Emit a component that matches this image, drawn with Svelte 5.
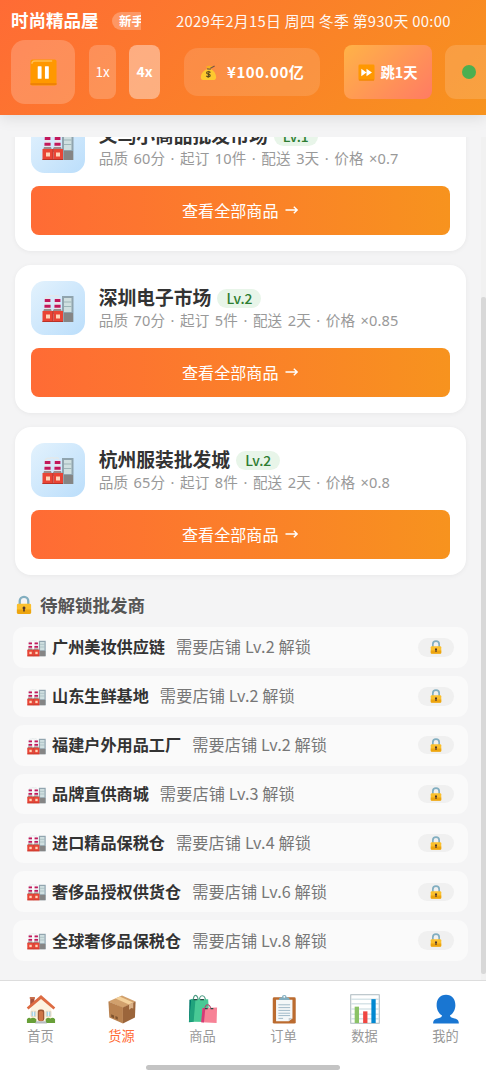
<script lang="ts">
  let currentTab = 'source';
  let speed = 4;
  let paused = false;

  const suppliers = [
    { name: '义乌小商品批发市场', level: 1, quality: 60, minOrder: 10, days: 3, price: '0.7' },
    { name: '深圳电子市场', level: 2, quality: 70, minOrder: 5, days: 2, price: '0.85' },
    { name: '杭州服装批发城', level: 2, quality: 65, minOrder: 8, days: 2, price: '0.8' }
  ];

  const lockedSuppliers = [
    { name: '广州美妆供应链', level: 2 },
    { name: '山东生鲜基地', level: 2 },
    { name: '福建户外用品工厂', level: 2 },
    { name: '品牌直供商城', level: 3 },
    { name: '进口精品保税仓', level: 4 },
    { name: '奢侈品授权供货仓', level: 6 },
    { name: '全球奢侈品保税仓', level: 8 }
  ];

  const tabs = [
    { id: 'home', label: '首页' },
    { id: 'source', label: '货源' },
    { id: 'goods', label: '商品' },
    { id: 'orders', label: '订单' },
    { id: 'data', label: '数据' },
    { id: 'mine', label: '我的' }
  ];
</script>

{#snippet factory()}
  <svg class="factory" viewBox="0 0 32 28">
    <path d="M3 4q1-3.500 5-2.500 2-2 4 0 3-1.500 5 .5" fill="none" stroke="#e3e8ea" stroke-width="1.5" />
    <path d="M3.2 3h4.6l.6 13H2.6zM13.2 3h4.6l.6 13h-5.8z" fill="#e8e4ea" />
    <path d="M2.8 4h5.600v3H2.700zM2.500 9.700h6.100v3H2.400zM12.800 4h5.600v3h-5.700zM12.500 9.700h6.100v3h-6.200z" fill="#c2185b" />
    <rect x="20" y="1" width="11.5" height="26" fill="#90a4ae" />
    <rect x="22" y="3" width="7.5" height="14" fill="#cfdfe0" />
    <path d="M22 7h7.5M22 11.5h7.5" stroke="#9db5b8" stroke-width="1" />
    <rect x="22" y="18" width="9" height="9" fill="#858585" />
    <path d="M1 17l1-3h7l1 3 2-3h7l1 3v2H1z" fill="#9b8c8c" />
    <path d="M.5 16H11v11H.5zM11.5 16H21v11h-9.5z" fill="#e94435" />
    <path d="M11 16v11M.5 26.5H21" stroke="#b93228" />
    <rect x="4" y="19.5" width="4" height="4" fill="#ffd4b8" />
    <rect x="14" y="19.5" width="4" height="4" fill="#ffd4b8" />
  </svg>
{/snippet}

{#snippet lock()}
  <svg class="lock" viewBox="0 0 18 22">
    <path d="M4.2 11V6.6a4.8 4.8 0 0 1 9.6 0V11" fill="none" stroke="#82aec0" stroke-width="2.6" />
    <rect x="1" y="9.5" width="16" height="11.5" rx="1.6" fill="#fbc02d" />
    <path d="M1 16h16v3.4q0 1.6-1.6 1.6H2.6q-1.6 0-1.6-1.6z" fill="#e59600" opacity=".65" />
    <path d="M9 12.6a1.7 1.7 0 0 1 .9 3.1v2.6H8.1v-2.6a1.7 1.7 0 0 1 .9-3.1z" fill="#4e342e" />
  </svg>
{/snippet}

<div class="app">
  <header>
    <div class="title-row">
      <span class="shop-name">时尚精品屋</span>
      <span class="tag-clip"><span class="tag">新手</span></span>
      <span class="date">2029年2月15日 周四 冬季 第930天 00:00</span>
    </div>
    <div class="controls">
      <button class="pause" on:click={() => (paused = !paused)} aria-label="暂停">
        <svg viewBox="0 0 28 28">
          <rect x=".5" y=".5" width="27" height="27" rx="2" fill="#ff9800" />
          <path d="M2 5q0-3 3-3h18" fill="none" stroke="#ffbd52" stroke-width="1.5" />
          <path d="M.5 26h27" stroke="#ef8205" stroke-width="2" />
          <rect x="8" y="7.5" width="4" height="13" rx=".6" fill="#fff" />
          <rect x="15.5" y="7.5" width="4" height="13" rx=".6" fill="#fff" />
        </svg>
      </button>
      <button class="speed one" class:active={speed === 1} on:click={() => (speed = 1)}>1x</button>
      <button class="speed four" class:active={speed === 4} on:click={() => (speed = 4)}>4x</button>
      <div class="money">
        <svg viewBox="0 0 18 18">
          <path d="M8.2 5C3 7 .8 11 .9 14.2c.1 2 1.4 2.8 3.4 2.8h9.2c2.4 0 3.5-1 3.5-3C17 10.5 14.5 6.5 11 5z" fill="#fdc92f" />
          <path d="M8 5.2L6.5 2.3q2 .6 3-.8 1.5 1.5 4.5.3L11.2 5.2z" fill="#f9b31c" />
          <path d="M7.5 5.2l4 .3M11 4.5l4.5-2.5" stroke="#795548" stroke-width="1.2" />
          <path d="M11.3 8.7q-4.3-1.2-4.3.7c0 1.7 4 1 3.8 2.9-.2 1.5-2.6 1.5-4.3.5M9.7 7.2l-1.3 7.5" fill="none" stroke="#5d4a1c" stroke-width="1.2" />
        </svg>
        <span>¥100.00亿</span>
      </div>
      <button class="skip">
        <svg viewBox="0 0 18 18">
          <rect x=".5" y=".5" width="17" height="17" rx="1.5" fill="#ff9800" />
          <path d="M1 17h16" stroke="#ed8208" />
          <path d="M3.500 5l5.500 4-5.500 4zM9 5l5.800 4L9 13z" fill="#fff" />
        </svg>
        <span>跳1天</span>
      </button>
      <div class="status"><i></i></div>
    </div>
  </header>

  <main>
    <div class="content">
      {#each suppliers as s}
        <div class="card">
          <div class="card-head">
            <div class="card-icon">{@render factory()}</div>
            <div class="card-info">
              <div class="card-title">
                <span class="name">{s.name}</span>
                <span class="level">Lv.{s.level}</span>
              </div>
              <div class="desc">品质 {s.quality}分 · 起订 {s.minOrder}件 · 配送 {s.days}天 · 价格 ×{s.price}</div>
            </div>
          </div>
          <button class="view-all">
            <span>查看全部商品</span>
            <svg viewBox="0 0 14 12"><path d="M.5 6h12M8.8 2.8L12.2 6 8.8 9.2" /></svg>
          </button>
        </div>
      {/each}

      <h2>{@render lock()}<span>待解锁批发商</span></h2>

      <div class="locked-list">
        {#each lockedSuppliers as s}
          <div class="locked">
            {@render factory()}
            <span class="locked-name">{s.name}</span>
            <span class="need">需要店铺 Lv.{s.level} 解锁</span>
            <span class="pill">{@render lock()}</span>
          </div>
        {/each}
      </div>
    </div>
    <div class="scrollbar"><div class="thumb"></div></div>
  </main>

  <nav>
    <div class="tabs">
      {#each tabs as tab}
        <button class="tab" class:selected={currentTab === tab.id} on:click={() => (currentTab = tab.id)}>
          <svg viewBox="0 0 32 32">
            {#if tab.id === 'home'}
              <path d="M4.5 4H9v9H4.5z" fill="#a8513b" />
              <path d="M4 3.2h5.5v2H4z" fill="#c9714f" />
              <path d="M5 14L16 4.5 27 14v15H5z" fill="#fdf3e0" />
              <path d="M16 1L.8 14.5l1.8 2L16 5.2l13.4 11.3 1.8-2z" fill="#dd6b42" />
              <rect x="12.5" y="16.5" width="7" height="12.5" rx="2.5" fill="#9c5635" />
              <rect x="13.8" y="18" width="4.4" height="11" rx="1.8" fill="#ce7547" />
              <path d="M5.5 18.5h5V24h-5zM21.5 18.5h5V24h-5z" fill="#a8d4e8" stroke="#e6d5be" />
              <path d="M8 18.5V24M24 18.5V24" stroke="#fff" stroke-width=".8" />
              <path d="M1 27q2-2.500 4-1 3-1.500 6 1v4H1zM21 27q2-2.500 5-1 3-1.500 5 1v4H21z" fill="#689f38" />
              <path d="M11 29h10l1.5 2.5h-13z" fill="#b7bcc0" />
            {:else if tab.id === 'source'}
              <path d="M1.5 8L16 1.5 30.5 8 17 15z" fill="#d1a06c" />
              <path d="M1.5 8L17 14.5v17L2.5 25z" fill="#b98250" />
              <path d="M30.5 8L17 14.5v17L29.8 25z" fill="#9b653b" />
              <path d="M9 4.7l4.5-2.1L28 9l-4.500 2.300z" fill="#f4d19b" />
              <path d="M23.5 11.3L28 9v6.5l-2-.7-2.5 2z" fill="#d9b188" />
              <path d="M4.5 21.5l3 1.3v3l-3-1.3zM9 23.5l2.5 1v3L9 26.5z" fill="#7f542f" />
            {:else if tab.id === 'goods'}
              <path d="M5.5 8c0-9 5-8.5 5.5 0M12 8c0-8 6-8.5 7 0" fill="none" stroke="#4d9b83" stroke-width="1.2" />
              <path d="M1.5 6L4 5.5 6 29.5l-5 .5z" fill="#00796b" />
              <path d="M3.5 5.5h18l1.5 24.3-18.5-.3z" fill="#49c995" />
              <path d="M3.5 5.5H8L6 29.5H1z" fill="#21a37c" />
              <path d="M18 16c.5-6 5-6 6.5 0" fill="none" stroke="#ad496f" stroke-width="1.2" />
              <path d="M15.5 15L31 14.5 30.5 31l-16-.8z" fill="#f78296" />
              <path d="M15.5 15h3L17 30.5l-3-.5z" fill="#d63b77" />
              <path d="M6 6h4M13 6h4M18 15.5h3M24 15.5h3" stroke="#284b46" stroke-width="1.3" />
            {:else if tab.id === 'orders'}
              <rect x="4" y="3.5" width="24.5" height="28" rx="1.5" fill="#bb6b2f" />
              <path d="M7.5 6H25v20l-4 3H7.5z" fill="#f4f7f8" />
              <path d="M25 25.5L21 29v-3.5z" fill="#c4cdd1" />
              <path d="M10 11.5h12.500M10 14.500h12.500M10 17.500h12.500M10 20.500h12.500M10 23h12.500M10 26h5" stroke="#9db6c5" />
              <path d="M10.500 6.500q0-3 3-3h.3a2.500 2.500 0 0 1 5 0h.3q3 0 3 3z" fill="#82aec0" />
              <circle cx="16.3" cy="3" r="1" fill="#fff" />
            {:else if tab.id === 'data'}
              <rect x=".8" y=".8" width="30.4" height="30.4" fill="#fff" stroke="#a7b5bb" />
              <path d="M1.5 5.5h29M1.500 10.500h29M1.500 16h29M1.500 21.500h29M1.500 26.500h29" stroke="#b9cfd7" stroke-width=".9" />
              <rect x="5" y="13.5" width="4.6" height="17.5" fill="#8bc367" />
              <rect x="14" y="18.5" width="4.6" height="12.5" fill="#ef4641" />
              <rect x="22.8" y="5.5" width="4.6" height="25.5" fill="#0288d1" />
            {:else}
              <path d="M16 .8c6.500 0 10 4.700 10 11.200 0 5-2.700 9.300-5.800 11 .4 2 2 2.200 5 3 3.500.8 4.500 2.300 4.500 5.500H2.300c0-3.200 1-4.700 4.500-5.500 3-.8 4.600-1 5-3C8.700 21.300 6 17 6 12 6 5.500 9.500.8 16 .8z" fill="#1976d2" />
            {/if}
          </svg>
          <span>{tab.label}</span>
        </button>
      {/each}
    </div>
    <div class="home-bar"></div>
  </nav>
</div>

<style>
  :global(body) {
    margin: 0;
    background: #f4f4f4;
  }

  .app {
    width: 486px;
    height: 1080px;
    display: flex;
    flex-direction: column;
    overflow: hidden;
    background: #f4f4f5;
    font-family: 'Noto Sans CJK SC', 'Noto Sans', sans-serif;
    color: #333;
  }

  button {
    font-family: inherit;
    border: none;
    margin: 0;
    padding: 0;
    cursor: pointer;
  }

  svg {
    display: block;
    flex: none;
  }

  header {
    position: relative;
    z-index: 1;
    flex: none;
    height: 115px;
    box-sizing: border-box;
    padding: 9px 0 0 11px;
    background: linear-gradient(135deg, #ff6b35, #f7931e);
    box-shadow: 0 3px 14px rgba(0, 0, 0, 0.1);
    color: #fff;
  }

  .title-row {
    display: flex;
    align-items: center;
    height: 22px;
    white-space: nowrap;
  }

  .shop-name {
    width: 101px;
    font-size: 17.5px;
    font-weight: 700;
    line-height: 22px;
  }

  .tag-clip {
    width: 29px;
    margin-top: 2px;
    overflow: hidden;
  }

  .tag {
    display: block;
    width: 42px;
    height: 18px;
    box-sizing: border-box;
    padding-left: 7px;
    border-radius: 9px;
    background: rgba(255, 255, 255, 0.25);
    font-size: 12.5px;
    font-weight: 700;
    line-height: 17px;
  }

  .date {
    margin-left: 35px;
    font-size: 14.85px;
    letter-spacing: 0.3px;
    opacity: 0.95;
  }

  .controls {
    display: flex;
    align-items: center;
    width: 475px;
    height: 64px;
    margin-top: 9px;
    overflow: hidden;
  }

  .controls > * {
    flex: none;
    color: #fff;
  }

  .pause {
    display: flex;
    align-items: center;
    justify-content: center;
    width: 64px;
    height: 64px;
    border-radius: 14px;
    background: rgba(255, 255, 255, 0.2);
  }

  .pause svg {
    width: 27px;
    height: 27px;
  }

  .speed {
    height: 54px;
    padding-bottom: 2px;
    border-radius: 8px;
    background: rgba(255, 255, 255, 0.2);
    font-size: 14px;
  }

  .one {
    width: 27px;
    margin-left: 14px;
    font-size: 13.5px;
  }

  .four {
    width: 31px;
    margin-left: 13px;
  }

  .speed.active {
    background: rgba(255, 255, 255, 0.4);
    font-weight: 700;
  }

  .money {
    display: flex;
    align-items: center;
    width: 136px;
    height: 48px;
    box-sizing: border-box;
    margin-left: 24px;
    padding-left: 16px;
    gap: 10px;
    border-radius: 14px;
    background: rgba(255, 255, 255, 0.13);
    font-size: 15px;
    font-weight: 700;
    letter-spacing: 0.55px;
    white-space: nowrap;
  }

  .money span,
  .skip span {
    padding-bottom: 2px;
  }

  .money svg,
  .skip svg {
    width: 17px;
    height: 17px;
  }

  .skip {
    display: flex;
    align-items: center;
    justify-content: center;
    gap: 5px;
    width: 88px;
    height: 54px;
    margin-left: 24px;
    border-radius: 8px;
    background: linear-gradient(135deg, #ffb347, #ff7b63);
    font-size: 14.3px;
    font-weight: 700;
  }

  .status {
    display: flex;
    align-items: center;
    width: 70px;
    height: 54px;
    box-sizing: border-box;
    margin-left: 13px;
    padding-left: 17px;
    border-radius: 11px;
    background: rgba(255, 255, 255, 0.15);
  }

  .status i {
    width: 14px;
    height: 14px;
    border-radius: 50%;
    background: #4caf50;
  }

  main {
    display: flex;
    height: 843px;
    flex: none;
    margin-top: 22px;
    overflow: hidden;
  }

  /* list is scrolled a little past the first card */
  .content {
    flex: 1;
    margin-top: -34.5px;
    padding: 0 15px 0 14.5px;
  }

  .card {
    height: 148.5px;
    box-sizing: border-box;
    margin-bottom: 13.5px;
    padding: 16.2px;
    border-radius: 16px;
    background: #fff;
    box-shadow: 0 1px 5px rgba(0, 0, 0, 0.05);
  }

  .card-head {
    display: flex;
    height: 54px;
    gap: 14px;
  }

  .card-icon {
    display: flex;
    align-items: center;
    justify-content: center;
    width: 54px;
    height: 54px;
    border-radius: 13.5px;
    background: linear-gradient(135deg, #e3f2fd, #bbdefb);
  }

  .card-icon .factory {
    width: 32px;
    height: 28px;
    margin-top: 2px;
  }

  .card-info {
    padding-top: 4px;
    white-space: nowrap;
  }

  .card-title {
    display: flex;
    align-items: center;
    height: 24px;
    gap: 6px;
  }

  .name {
    font-size: 18.8px;
    font-weight: 700;
    line-height: 24px;
  }

  .level {
    height: 19px;
    margin-top: 4px;
    padding: 0 9px;
    border-radius: 10px;
    background: #e8f5e9;
    color: #2e7d32;
    font-size: 13.9px;
    font-weight: 500;
    line-height: 18px;
  }

  .desc {
    color: #999;
    font-family: 'Noto Sans', 'Noto Sans CJK SC', sans-serif;
    font-size: 14.6px;
    letter-spacing: 0.1px;
    word-spacing: 1.55px;
    line-height: 22px;
  }

  .view-all {
    display: flex;
    align-items: center;
    justify-content: center;
    gap: 6px;
    width: 100%;
    height: 48.6px;
    margin-top: 13.5px;
    border-radius: 8px;
    background: linear-gradient(90deg, #ff6b35, #f7931e);
    color: #fff;
    font-size: 16.1px;
  }

  .view-all span {
    padding-bottom: 1px;
  }

  .view-all svg {
    width: 14px;
    height: 12px;
    fill: none;
    stroke: #fff;
    stroke-width: 1.4;
  }

  h2 {
    display: flex;
    align-items: center;
    gap: 8px;
    height: 26px;
    margin: 17px 0 9px 1.5px;
    color: #555;
    font-size: 17.5px;
    font-weight: 700;
  }

  h2 span {
    padding-bottom: 2px;
  }

  h2 .lock {
    width: 16px;
    height: 20px;
  }

  .locked-list {
    display: flex;
    flex-direction: column;
    gap: 8.1px;
    margin: 0 -1.5px;
  }

  .locked {
    display: flex;
    align-items: center;
    height: 40.8px;
    box-sizing: border-box;
    padding: 0 14px;
    border-radius: 11px;
    background: #fafafa;
    white-space: nowrap;
  }

  .locked .factory {
    width: 19px;
    height: 17px;
    margin-top: 2px;
  }

  .locked-name {
    margin-left: 6px;
    padding-bottom: 2px;
    font-size: 16.15px;
    font-weight: 700;
  }

  .need {
    margin-left: 11px;
    padding-bottom: 2px;
    color: #777;
    font-size: 16.2px;
    letter-spacing: 0.1px;
  }

  .pill {
    display: flex;
    align-items: center;
    justify-content: center;
    width: 36px;
    height: 18.5px;
    margin-left: auto;
    border-radius: 10px;
    background: #f0f0f0;
  }

  .pill .lock {
    width: 12px;
    height: 14.5px;
  }

  .scrollbar {
    width: 5px;
    flex: none;
    padding-top: 160px;
    background: #f1f1f1;
  }

  .thumb {
    height: 677px;
    border-radius: 2px;
    background: #d8d8d8;
  }

  nav {
    flex: none;
    height: 100px;
    box-sizing: border-box;
    border-top: 1px solid #ddd;
    background: #fff;
  }

  .tabs {
    display: flex;
    height: 84px;
  }

  .tab {
    flex: 1;
    display: flex;
    flex-direction: column;
    align-items: center;
    padding-top: 13px;
    background: none;
    color: #999;
    font-size: 13.2px;
    line-height: 20px;
  }

  .tab svg {
    width: 30px;
    height: 30px;
    margin-bottom: 2px;
  }

  .selected {
    color: #ff6b35;
  }

  .home-bar {
    width: 194px;
    height: 5px;
    margin: 0 auto;
    border-radius: 3px;
    background: #c4c4c4;
  }
</style>
